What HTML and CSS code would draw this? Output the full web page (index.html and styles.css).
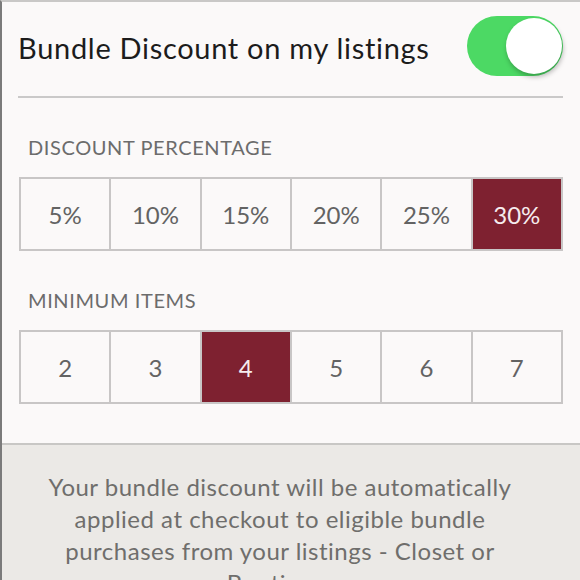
FILE: index.html
```html
<!DOCTYPE html>
<html lang="en">

<head>
    <meta charset="UTF-8">
    <title>Bundle Discount</title>
    <link rel="stylesheet" href="styles.css">
</head>

<body>
    <div id="box">
        <div id="settings">
            <div id="top_row">
                <p id="title">Bundle Discount on my listings</p>
                <div class="toggle on">
                    <span class="knob"></span>
                </div>
            </div>

            <p class="label">DISCOUNT PERCENTAGE</p>
            <div class="choices">
                <span>5%</span>
                <span>10%</span>
                <span>15%</span>
                <span>20%</span>
                <span>25%</span>
                <span class="active">30%</span>
            </div>

            <p class="label">MINIMUM ITEMS</p>
            <div class="choices">
                <span>2</span>
                <span>3</span>
                <span class="active">4</span>
                <span>5</span>
                <span>6</span>
                <span>7</span>
            </div>
        </div>

        <div id="note">
            <p>Your bundle discount will be automatically applied at checkout to eligible bundle purchases from your listings - Closet or Boutique.</p>
        </div>
    </div>
</body>

</html>
```

FILE: styles.css
```css
* {
    margin: 0;
    padding: 0;
    box-sizing: border-box;
}

body {
    background: #fbf9f9;
    font-family: Lato, "Noto Sans", sans-serif;
    overflow: hidden;
}

#box {
    height: 580px;
    border-top: 2px solid #c9c8c7;
    border-left: 2px solid #7b7b7b;
    overflow: hidden;
}

#settings {
    padding: 0 17px 0 16px;
    height: 441px;
}

#top_row {
    height: 96px;
    display: flex;
    align-items: center;
    justify-content: space-between;
    border-bottom: 2px solid #cac9c9;
}

#title {
    font-size: 29px;
    letter-spacing: 0.7px;
    color: #1c1c1c;
    margin-top: -4px;
}

.toggle {
    width: 96px;
    height: 60px;
    border-radius: 30px;
    background: #4cd964;
    display: flex;
    align-items: center;
    justify-content: flex-end;
    padding-right: 1px;
    margin-top: -6px;
}

.knob {
    width: 56px;
    height: 56px;
    border-radius: 50%;
    background: #fff;
    box-shadow: 1px 3px 5px rgba(0, 0, 0, 0.28);
}

.label {
    font-size: 20px;
    letter-spacing: 0.6px;
    color: #6c6c6c;
    margin: 37px 0 0 10px;
    line-height: 24px;
}

.choices {
    display: grid;
    grid-template-columns: repeat(6, 1fr);
    margin: 18px 0 0 1px;
    height: 74px;
    border: 2px solid #c8c6c6;
    border-right: none;
}

.choices span {
    display: flex;
    align-items: center;
    justify-content: center;
    border-right: 2px solid #c8c6c6;
    font-size: 24px;
    color: #636363;
}

.choices span.active {
    background: #7e2130;
    color: #f6ecee;
}

#note {
    border-top: 2px solid #c8c7c5;
    background: #ebe9e6;
    height: 200px;
    padding: 26px 63px 0 41px;
}

#note p {
    font-size: 24px;
    letter-spacing: 0.5px;
    line-height: 32px;
    color: #6f6e6c;
    text-align: center;
}
```
